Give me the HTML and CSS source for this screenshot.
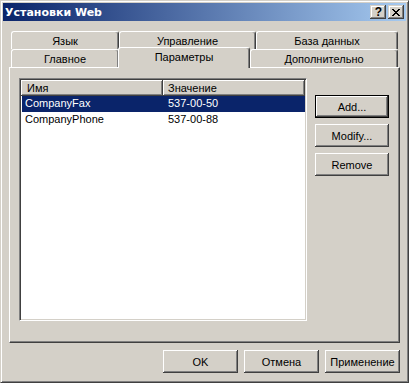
FILE: index.html
```html
<!DOCTYPE html>
<html lang="ru">
<head>
    <meta charset="UTF-8">
    <title>Установки Web</title>
    <link rel="stylesheet" href="styles.css">
</head>
<body>

<div class="window">
    <div class="titlebar">
        <span class="title">Установки Web</span>
        <div class="caption-buttons">
            <span class="cap-btn help">?</span>
            <span class="cap-btn close">
                <svg width="8" height="7" viewBox="0 0 8 7" shape-rendering="crispEdges">
                    <path d="M0 0h2v1h-2z M6 0h2v1h-2z M1 1h2v1h-2z M5 1h2v1h-2z M2 2h4v1h-4z M3 3h2v1h-2z M2 4h4v1h-4z M1 5h2v1h-2z M5 5h2v1h-2z M0 6h2v1h-2z M6 6h2v1h-2z" fill="#000"/>
                </svg>
            </span>
        </div>
    </div>

    <div class="dialog-body">
        <!-- two rows of tabs, the selected one sits on the lower row -->
        <div class="tabs">
            <div class="tab-row">
                <div class="tab tab-lang">Язык</div>
                <div class="tab tab-manage">Управление</div>
                <div class="tab tab-db">База данных</div>
            </div>
            <div class="tab-row">
                <div class="tab tab-main">Главное</div>
                <div class="tab tab-params selected">Параметры</div>
                <div class="tab tab-extra">Дополнительно</div>
            </div>
        </div>

        <div class="page">
            <div class="listview">
                <div class="lv-header">
                    <div class="col col-name">Имя</div>
                    <div class="col col-value">Значение</div>
                </div>
                <div class="lv-row selected">
                    <span class="cell cell-name">CompanyFax</span>
                    <span class="cell cell-value">537-00-50</span>
                </div>
                <div class="lv-row">
                    <span class="cell cell-name">CompanyPhone</span>
                    <span class="cell cell-value">537-00-88</span>
                </div>
            </div>

            <div class="side-buttons">
                <button class="btn default">Add...</button>
                <button class="btn">Modify...</button>
                <button class="btn">Remove</button>
            </div>
        </div>

        <div class="footer">
            <button class="btn wide">OK</button>
            <button class="btn wide">Отмена</button>
            <button class="btn wide">Применение</button>
        </div>
    </div>
</div>

</body>
</html>
```

FILE: styles.css
```css
body {
    margin: 0;
    background: #d4d0c8;
}

/* Classic window frame */
.window {
    width: 409px;
    height: 383px;
    box-sizing: border-box;
    background: #d4d0c8;
    border: 1px solid;
    border-color: #d4d0c8 #404040 #404040 #d4d0c8;
    box-shadow: inset 1px 1px #fff, inset -1px -1px #808080;
    padding: 2px;
    font: 11px "Liberation Sans", Arial, sans-serif;
    color: #000;
}

.titlebar {
    height: 18px;
    display: flex;
    align-items: center;
    justify-content: space-between;
    background: linear-gradient(to right, #0a246a, #a6caf0);
    padding: 0 2px;
}

.title {
    color: #fff;
    font: bold 11px "DejaVu Sans", Verdana, sans-serif;
}

.caption-buttons {
    display: flex;
    gap: 2px;
}

.cap-btn {
    width: 16px;
    height: 14px;
    box-sizing: border-box;
    background: #d4d0c8;
    box-shadow: inset -1px -1px #404040, inset 1px 1px #d4d0c8, inset -2px -2px #808080, inset 2px 2px #fff;
    display: flex;
    align-items: center;
    justify-content: center;
}

.cap-btn.help {
    font-weight: bold;
    font-size: 12px;
    line-height: 14px;
    padding-left: 1px;
}

.dialog-body {
    padding: 10px 6px 0 6px;
}

/* Tabs */
.tabs {
    padding-left: 2px;
}

.tab-row {
    display: flex;
    height: 18px;
}

.tab {
    height: 18px;
    box-sizing: border-box;
    border-left: 1px solid #fff;
    border-top: 1px solid #fff;
    border-right: 1px solid #404040;
    box-shadow: inset -1px 0 #808080;
    border-radius: 3px 3px 0 0;
    text-align: center;
    line-height: 18px;
    background: #d4d0c8;
    white-space: nowrap;
}

.tab-lang { width: 108px; }
.tab-manage { width: 137px; }
.tab-db { width: 142px; }
.tab-main { width: 108px; }
.tab-params { width: 132px; }
.tab-extra { width: 148px; }

.tab.selected {
    height: 21px;
    margin-top: -2px;
    margin-left: -1px;
    position: relative;
    z-index: 1;
    line-height: 18px;
}

/* Tab page */
.page {
    height: 276px;
    box-sizing: border-box;
    border: 1px solid;
    border-color: #fff #404040 #404040 #fff;
    box-shadow: inset -1px -1px #808080;
    padding: 10px 9px 0 9px;
    display: flex;
    gap: 8px;
    align-items: flex-start;
}

.listview {
    width: 288px;
    height: 243px;
    box-sizing: border-box;
    background: #fff;
    border: 1px solid;
    border-color: #808080 #fff #fff #808080;
    box-shadow: inset 1px 1px #404040, inset -1px -1px #d4d0c8;
    padding: 1px;
}

.lv-header {
    display: flex;
    height: 16px;
    background: #d4d0c8;
    width: 284px;
}

.col {
    box-sizing: border-box;
    height: 16px;
    line-height: 16px;
    box-shadow: inset -1px -1px #404040, inset 1px 1px #fff, inset -2px -2px #808080;
}

.col-name {
    width: 142px;
    padding-left: 6px;
}

.col-value {
    width: 142px;
    padding-left: 5px;
}

.lv-row {
    display: flex;
    height: 16px;
    line-height: 15px;
    width: 283px;
    margin-left: 1px;
}

.lv-row.selected {
    background: #0a246a;
    color: #fff;
}

.cell-name {
    width: 141px;
    padding-left: 3px;
    box-sizing: border-box;
}

.cell-value {
    padding-left: 5px;
}

/* Buttons */
.side-buttons {
    display: flex;
    flex-direction: column;
    gap: 6px;
    margin-top: 17px;
}

.btn {
    width: 74px;
    height: 23px;
    box-sizing: border-box;
    padding: 0;
    border: none;
    background: #d4d0c8;
    box-shadow: inset -1px -1px #404040, inset 1px 1px #fff, inset -2px -2px #808080;
    font: 11px "Liberation Sans", Arial, sans-serif;
    color: #000;
}

.btn.default {
    border: 1px solid #000;
}

.btn.wide {
    width: 75px;
}

.footer {
    display: flex;
    justify-content: flex-end;
    gap: 6px;
    margin-top: 7px;
}
```
